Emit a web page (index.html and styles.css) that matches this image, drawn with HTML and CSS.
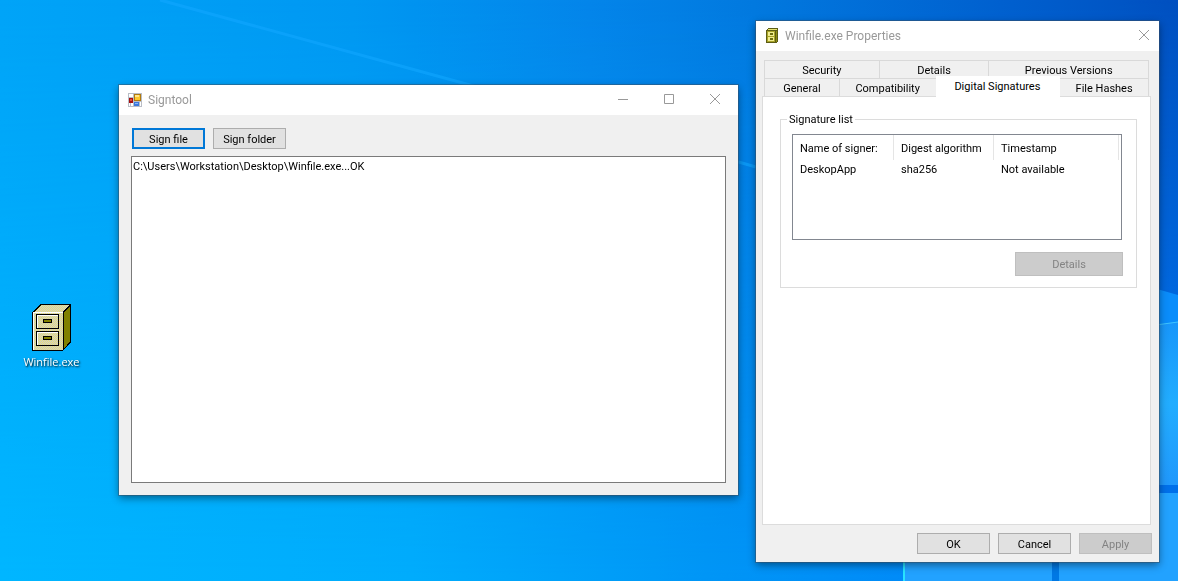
FILE: index.html
```html
<!DOCTYPE html>
<html lang="en">
<head>
    <meta charset="UTF-8">
    <meta name="viewport" content="width=device-width, initial-scale=1.0">
    <title>Signtool</title>
    <link rel="stylesheet" href="styles.css">
</head>
<body>
    <svg class="wallpaper" viewBox="0 0 1178 581" preserveAspectRatio="none" aria-hidden="true">
        <defs>
            <linearGradient id="sky" x1="0" y1="0" x2="1" y2="0">
                <stop offset="0" stop-color="#00a4f8"/>
                <stop offset="0.3" stop-color="#0098f2"/>
                <stop offset="0.5" stop-color="#0485ea"/>
                <stop offset="0.64" stop-color="#0279df"/>
                <stop offset="0.85" stop-color="#0160cf"/>
                <stop offset="1" stop-color="#0150c0"/>
            </linearGradient>
            <linearGradient id="floor" x1="0" y1="0" x2="1" y2="0">
                <stop offset="0" stop-color="#00b6ff"/>
                <stop offset="0.35" stop-color="#00acfc"/>
                <stop offset="0.6" stop-color="#0096f6"/>
                <stop offset="1" stop-color="#007dfa"/>
            </linearGradient>
            <linearGradient id="fade" x1="0" y1="0" x2="0" y2="1">
                <stop offset="0" stop-color="#000"/>
                <stop offset="1" stop-color="#fff"/>
            </linearGradient>
            <linearGradient id="pane" x1="0" y1="0" x2="0" y2="1">
                <stop offset="0" stop-color="#1896fa"/>
                <stop offset="0.5" stop-color="#22adff"/>
                <stop offset="1" stop-color="#2098fc"/>
            </linearGradient>
            <mask id="fadeMask"><rect width="1178" height="581" fill="url(#fade)"/></mask>
        </defs>
        <rect width="1178" height="581" fill="url(#sky)"/>
        <rect width="1178" height="581" fill="url(#floor)" mask="url(#fadeMask)"/>
        <path d="M160 0L470 85L756 167" fill="none" stroke="#10a6ff" stroke-width="3" opacity="0.6"/>
        <path d="M1150 287L1178 295V581H1050Z" fill="#0a8dfb"/>
        <path d="M1060 338L1178 322V485H1060Z" fill="url(#pane)"/>
        <path d="M1060 338L1178 322" stroke="#3fc4ff" stroke-width="1"/>
        <rect x="905" y="493" width="273" height="88" fill="#22a2ff"/>
        <rect x="1050" y="485" width="128" height="8" fill="#0070ea"/>
        <rect x="1052" y="493" width="7" height="88" fill="#0078e4"/>
        <rect x="903" y="493" width="2" height="88" fill="#28e4ff"/>
    </svg>

    <main class="desktop">
        <a class="shortcut" href="#properties">
            <svg width="39" height="47" viewBox="0 0 39 47" shape-rendering="crispEdges" aria-hidden="true">
                <defs>
                    <pattern id="dither" width="2" height="2" patternUnits="userSpaceOnUse">
                        <rect width="2" height="2" fill="#cecece"/>
                        <path d="M0 0h1v1H0zM1 1h1v1H1z" fill="#e8e078"/>
                    </pattern>
                </defs>
                <path d="M0 8L8 0H39V38L31 47H0Z" fill="#000"/>
                <path d="M2 8L9 1H37L30 8Z" fill="url(#dither)"/>
                <path d="M32 9L38 2V37L32 45Z" fill="#808000"/>
                <path d="M1 9H31V46H1Z" fill="url(#dither)"/>
                <path d="M1 8H31V9H1ZM1 8H2V46H1Z" fill="#fff"/>
                <path d="M4 10H27V25H4ZM4 27H27V42H4Z" fill="#000"/>
                <path d="M5 11H26V24H5ZM5 28H26V41H5Z" fill="url(#dither)"/>
                <path d="M5 11H26V12H5ZM5 11H6V24H5ZM5 28H26V29H5ZM5 28H6V41H5Z" fill="#fff"/>
                <path d="M11 15H20V19H11ZM11 32H20V36H11Z" fill="#000"/>
                <path d="M12 16H19V18H12ZM12 33H19V35H12Z" fill="#808000"/>
            </svg>
            <span>Winfile.exe</span>
        </a>

        <section class="window signtool">
            <header class="titlebar">
                <svg class="title-icon" width="14" height="14" viewBox="0 0 14 14" shape-rendering="crispEdges" aria-hidden="true">
                    <path d="M0 0H14V14H0Z" fill="#b9bdc6"/>
                    <path d="M1 1H5V4H1ZM1 10H2V13H1ZM3 10H5V13H3ZM12 9H13V13H12Z" fill="#fff"/>
                    <path d="M1 5H5V10H1Z" fill="#a80f0f"/>
                    <path d="M2 6H4V8H2Z" fill="#e04a3c"/>
                    <path d="M6 1H13V8H6Z" fill="#b07a10"/>
                    <path d="M7 2H12V7H7Z" fill="#fcc82c"/>
                    <path d="M7 2H11V4H7Z" fill="#ffe58a"/>
                    <path d="M6 9H11V13H6Z" fill="#3c78dc"/>
                    <path d="M7 10H10V11H7Z" fill="#86b6f8"/>
                </svg>
                <h1>Signtool</h1>
                <div class="window-controls">
                    <button type="button" aria-label="Minimize">
                        <svg width="10" height="10" viewBox="0 0 10 10"><path d="M0 5.500H10"/></svg>
                    </button>
                    <button type="button" aria-label="Maximize">
                        <svg width="10" height="10" viewBox="0 0 10 10"><path d="M.5 .5H9.500V9.500H.5Z"/></svg>
                    </button>
                    <button type="button" aria-label="Close">
                        <svg width="10" height="10" viewBox="0 0 10 10"><path d="M0 0L10 10M10 0L0 10"/></svg>
                    </button>
                </div>
            </header>
            <div class="signtool-body">
                <div class="toolbar">
                    <button type="button" class="btn focused">Sign file</button>
                    <button type="button" class="btn">Sign folder</button>
                </div>
                <textarea class="log" aria-label="Output" spellcheck="false" readonly>C:\Users\Workstation\Desktop\Winfile.exe...OK</textarea>
            </div>
        </section>

        <section class="window properties" id="properties">
            <header class="titlebar">
                <svg class="title-icon" width="14" height="16" viewBox="0 0 14 16" shape-rendering="crispEdges" aria-hidden="true">
                    <path d="M1 2L3 0H13V13L11 15H1Z" fill="#5c5c14"/>
                    <path d="M3 1H12L11 2H2Z" fill="#e8e470"/>
                    <path d="M11 3L12 2V13L11 14Z" fill="#8c8c10"/>
                    <path d="M2 3H10V14H2Z" fill="#a8a428"/>
                    <path d="M3 4H9V8H3ZM3 9H9V13H3Z" fill="#f0ec90"/>
                    <path d="M5 5H8V7H5ZM5 10H8V12H5Z" fill="#6c6c10"/>
                </svg>
                <h2>Winfile.exe Properties</h2>
                <div class="window-controls narrow">
                    <button type="button" aria-label="Close">
                        <svg width="10" height="10" viewBox="0 0 10 10"><path d="M0 0L10 10M10 0L0 10"/></svg>
                    </button>
                </div>
            </header>
            <div class="properties-body">
                <div class="tabs" role="tablist">
                    <div class="tab-row back">
                        <button type="button" role="tab">Security</button>
                        <button type="button" role="tab">Details</button>
                        <button type="button" role="tab">Previous Versions</button>
                    </div>
                    <div class="tab-row front">
                        <button type="button" role="tab">General</button>
                        <button type="button" role="tab">Compatibility</button>
                        <button type="button" role="tab" class="active" aria-selected="true">Digital Signatures</button>
                        <button type="button" role="tab">File Hashes</button>
                    </div>
                </div>
                <div class="tab-panel" role="tabpanel">
                    <fieldset class="group">
                        <legend>Signature list</legend>
                        <div class="list">
                            <table>
                                <thead>
                                    <tr><th>Name of signer:</th><th>Digest algorithm</th><th>Timestamp</th></tr>
                                </thead>
                                <tbody>
                                    <tr><td>DeskopApp</td><td>sha256</td><td>Not available</td></tr>
                                </tbody>
                            </table>
                        </div>
                        <button type="button" class="btn details" disabled>Details</button>
                    </fieldset>
                </div>
                <footer class="dialog-buttons">
                    <button type="button" class="btn">OK</button>
                    <button type="button" class="btn">Cancel</button>
                    <button type="button" class="btn" disabled>Apply</button>
                </footer>
            </div>
        </section>
    </main>
</body>
</html>
```
FILE: styles.css
```css
* {
    box-sizing: border-box;
}
body {
    margin: 0;
    background-color: #0095f5;
    font-family: Roboto, "Liberation Sans", Arial, sans-serif;
    font-size: 11px;
    line-height: 13px;
    color: #000;
}
button,
textarea {
    font: inherit;
    color: inherit;
}
.wallpaper {
    position: fixed;
    inset: 0;
    width: 100%;
    height: 100%;
}
.desktop {
    position: relative;
    display: grid;
    grid-template-columns: 103px minmax(0, 1fr) 403px;
    gap: 16px;
    min-height: 100vh;
    padding: 21px 19px 19px 0;
}

/* Desktop icon */
.shortcut {
    display: flex;
    flex-direction: column;
    align-items: center;
    align-self: start;
    gap: 4px;
    margin-top: 283px;
    font-family: "Open Sans", "Noto Sans", sans-serif;
    font-size: 11px;
    line-height: 14px;
    color: #fff;
    text-decoration: none;
    text-shadow: 1px 1px 2px #000;
}

/* Windows */
.window {
    display: flex;
    flex-direction: column;
    background-color: #f0f0f0;
    box-shadow: 0 0 0 1px rgba(60,80,100,0.5), 0 3px 8px rgba(0,0,0,0.45);
}
.titlebar {
    display: flex;
    align-items: center;
    height: 30px;
    padding-left: 9px;
    background-color: #fff;
    color: #999;
}
.titlebar h1,
.titlebar h2 {
    margin: 0 auto 0 6px;
    font-family: Roboto, "Open Sans", sans-serif;
    font-size: 12px;
    font-weight: normal;
    line-height: 16px;
}
.window-controls {
    display: flex;
    align-self: stretch;
}
.window-controls button {
    display: flex;
    align-items: center;
    justify-content: center;
    width: 46px;
    padding: 0 0 2px;
    border: none;
    background: none;
}
.window-controls.narrow button {
    width: 30px;
}
.window-controls svg {
    fill: none;
    stroke: #999;
}
.btn {
    width: 73px;
    height: 21px;
    padding: 1px 0 0;
    border: 1px solid #adadad;
    background-color: #e1e1e1;
}
.btn.focused {
    border: 2px solid #0078d7;
}
.btn:disabled {
    border-color: #bfbfbf;
    background-color: #ccc;
    color: #838383;
}

/* Signtool */
.signtool {
    margin: 64px 2px 67px 0;
}
.signtool-body {
    display: flex;
    flex: 1;
    flex-direction: column;
    gap: 7px;
    padding: 13px 12px 12px;
}
.toolbar {
    display: flex;
    gap: 8px;
    padding-left: 1px;
}
.log {
    flex: 1;
    width: 100%;
    padding: 3px 1px;
    border: 1px solid #7a7a7a;
    outline: none;
    background-color: #fff;
    resize: none;
}

/* Properties dialog */
.properties-body {
    display: flex;
    flex: 1;
    flex-direction: column;
    padding: 9px 7px 8px 6px;
}
.tabs {
    padding: 0 3px 0 2px;
}
.tab-row {
    display: grid;
    height: 18px;
    border-left: 1px solid #d9d9d9;
}
.tab-row.back {
    grid-template-columns: 115fr 110fr 160fr;
}
.tab-row.front {
    grid-template-columns: 75fr 97fr 124fr 89fr;
}
.tab-row button {
    padding: 2px 0 0;
    border: solid #d9d9d9;
    border-width: 1px 1px 0 0;
    background-color: #f0f0f0;
}
.tab-row .active {
    z-index: 1;
    margin: -2px 0 -1px -1px;
    padding: 0 0 2px;
    border-color: #fff;
    background-color: #fff;
}
.tab-panel {
    flex: 1;
    margin-right: 1px;
    padding: 16px 13px 16px 17px;
    border: 1px solid #dcdcdc;
    background-color: #fff;
}
.group {
    display: flex;
    flex-direction: column;
    margin: 0;
    padding: 8px 13px 11px 11px;
    border: 1px solid #dcdcdc;
}
.group legend {
    margin-left: -5px;
    padding: 0 2px;
}
.list {
    height: 106px;
    margin-right: 1px;
    border: 1px solid #828790;
}
.list table {
    width: calc(100% - 2px);
    border-collapse: separate;
    border-spacing: 0;
    table-layout: fixed;
}
.list th,
.list td {
    padding: 1px 0 0 7px;
    font-weight: normal;
    text-align: left;
}
.list th {
    width: 101px;
    height: 25px;
    border-right: 1px solid #e5e5e5;
}
.list th:nth-child(2) {
    width: 100px;
}
.list th:last-child {
    width: auto;
}
.list td {
    height: 18px;
}
.details {
    align-self: flex-end;
    width: 108px;
    height: 24px;
    margin-top: 12px;
}
.dialog-buttons {
    display: flex;
    justify-content: flex-end;
    gap: 8px;
    padding-top: 8px;
}
```
